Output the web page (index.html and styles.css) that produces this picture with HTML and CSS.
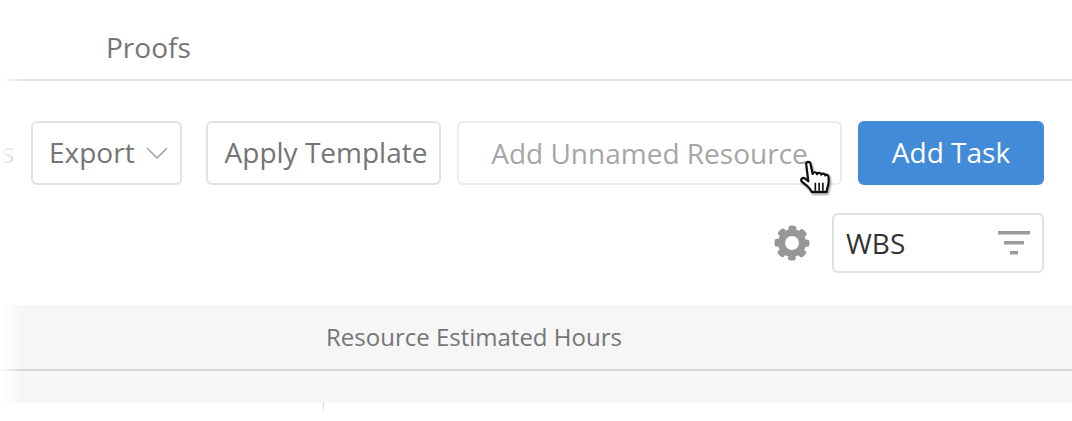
FILE: index.html
```html
<!DOCTYPE html>
<html lang="en">

<head>
    <meta charset="UTF-8">
    <meta name="viewport" content="width=device-width, initial-scale=1.0">
    <title>Tasks</title>
    <link rel="stylesheet" href="styles.css">
</head>

<body>
    <div class="page">
        <div class="tabs">
            <span class="tab">Proofs</span>
        </div>

        <div class="toolbar">
            <span class="ghost">s</span>
            <button class="btn export">Export
                <svg class="chevron" width="22" height="12" viewBox="0 0 22 12">
                    <path d="M1 1l10 10L21 1" fill="none" stroke="#a3a3a3" stroke-width="1.6" />
                </svg>
            </button>
            <button class="btn template">Apply Template</button>
            <button class="btn unnamed">Add Unnamed Resource</button>
            <button class="btn primary">Add Task</button>
        </div>

        <div class="filters">
            <svg class="gear" width="36" height="36" viewBox="0 0 36 36">
                <circle cx="18" cy="18" r="10.500" fill="none" stroke="#979797" stroke-width="7" />
                <circle cx="18" cy="18" r="15" fill="none" stroke="#979797" stroke-width="5" stroke-linecap="round" stroke-dasharray="3.200 8.581" stroke-dashoffset="1.600" />
            </svg>
            <div class="select">
                <span>WBS</span>
                <svg width="32" height="24" viewBox="0 0 32 24">
                    <path fill="#9b9b9b" d="M0 0h32v3.500H0zM6 10h20v3.500H6zM12 20h8v3.500h-8z" />
                </svg>
            </div>
        </div>

        <div class="table-head">
            <div class="head-row">
                <span class="head-cell">Resource Estimated Hours</span>
            </div>
            <div class="head-sub"></div>
        </div>
        <div class="tick"></div>

        <div class="fade"></div>

        <svg class="cursor" width="37" height="41" viewBox="0 0 34 38">
            <defs>
                <filter id="drop" x="-20%" y="-20%" width="150%" height="150%">
                    <feDropShadow dx="1" dy="1.500" stdDeviation="1" flood-color="#000" flood-opacity=".45" />
                </filter>
            </defs>
            <path filter="url(#drop)" fill="#fff" stroke="#111" stroke-width="2" stroke-linejoin="round" d="M6.500 3.500c0-2.400 3.600-2.400 4 0l2 9.500c.2-2.200 3.600-2.200 4 .2.400-1.800 3.600-1.800 4 .4.500-1.500 3.400-1.300 3.800.7.400-1 2.700-.7 2.900 1 .4 3 .2 6.500-.6 9-.5 1.700-1 3.200-1.200 5.200H11.500c-.5-2-1.700-3.300-3.500-5L2.500 20c-1.700-1.900.6-4.300 2.600-3l3.400 2.700z" />
            <path fill="none" stroke="#111" stroke-width="1.500" d="M15 21v7.500M18.500 21v7.500M22 21v7.500" />
        </svg>
    </div>
</body>

</html>
```

FILE: styles.css
```css
* {
    box-sizing: border-box;
}

body {
    margin: 0;
    background: #fff;
    font-family: "Open Sans", "Liberation Sans", sans-serif;
}

.page {
    position: relative;
    width: 1072px;
    height: 421px;
    overflow: hidden;
}

.tabs {
    height: 81px;
    padding: 29px 0 0 106px;
    border-bottom: 2px solid #e3e3e3;
}

.tab {
    font-size: 28px;
    line-height: 36px;
    color: #757575;
}

.toolbar {
    display: flex;
    align-items: center;
    margin-top: 40px;
    padding: 0 28px 0 1px;
    height: 64px;
}

.ghost {
    width: 30px;
    padding-bottom: 2px;
    font-size: 28px;
    color: #c4c4c4;
}

.btn {
    height: 64px;
    padding: 0 0 2px;
    font-family: inherit;
    font-size: 28px;
    color: #757575;
    background: #fff;
    border: 2px solid #e2e2e2;
    border-radius: 6px;
}

.export {
    display: flex;
    align-items: center;
    width: 151px;
    padding-left: 16px;
    margin-right: 24px;
}

.chevron {
    margin-left: 11px;
    margin-top: 1px;
}

.template {
    width: 235px;
    padding-left: 5px;
    margin-right: 16px;
}

.unnamed {
    width: 385px;
    padding-bottom: 1px;
    margin-right: 16px;
    color: #a6a6a6;
    border-color: #ececec;
}

.primary {
    width: 186px;
    color: #fff;
    background: #428bd9;
    border-color: #428bd9;
}

.filters {
    display: flex;
    justify-content: flex-end;
    align-items: center;
    margin-top: 28px;
    padding-right: 28px;
}

.gear {
    margin-right: 22px;
}

.select {
    display: flex;
    justify-content: space-between;
    align-items: center;
    width: 212px;
    height: 60px;
    padding: 0 12px;
    font-size: 28px;
    color: #333;
    border: 2px solid #e0e0dc;
    border-radius: 6px;
}

.table-head {
    margin-top: 32px;
    height: 98px;
    background: #f6f6f6;
}

.head-row {
    height: 66px;
    padding: 16px 0 0 326px;
    border-bottom: 2px solid #d6d6d6;
}

.head-cell {
    font-size: 24px;
    line-height: 32px;
    color: #757575;
}

.tick {
    width: 1px;
    height: 14px;
    margin-left: 323px;
    background: linear-gradient(#d0d0d0, #fff);
}

.fade {
    position: absolute;
    top: 0;
    left: 0;
    width: 22px;
    height: 100%;
    background: linear-gradient(to right, #fff, rgba(255, 255, 255, 0));
}

.cursor {
    position: absolute;
    left: 799px;
    top: 160px;
}
```
